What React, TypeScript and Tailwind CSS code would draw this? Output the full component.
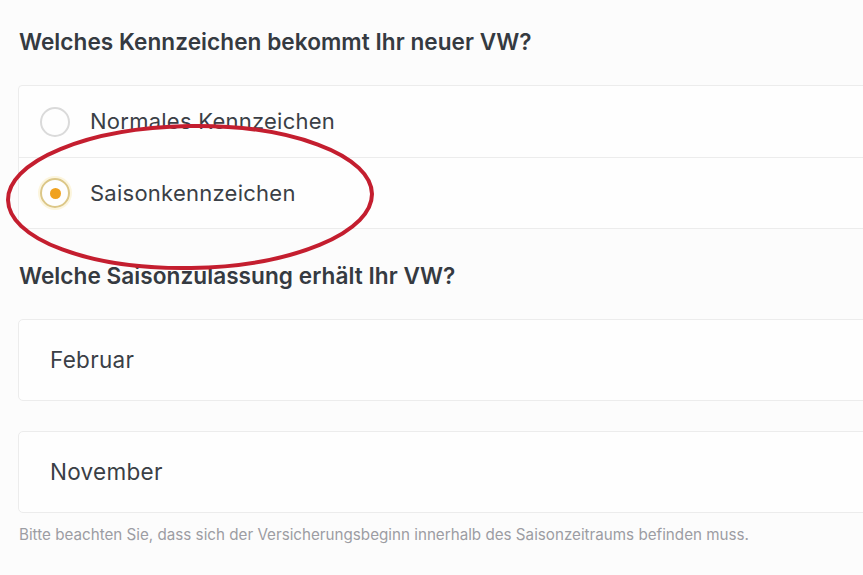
const options = [
  { label: "Normales Kennzeichen", checked: false },
  { label: "Saisonkennzeichen", checked: true },
];

function Radio({ checked }: { checked: boolean }) {
  if (checked) {
    return (
      <span className="flex h-[30px] w-[30px] items-center justify-center rounded-full border-2 border-[#dcc787] shadow-[0_0_0_2px_rgba(250,230,160,0.35)]">
        <span className="h-[11px] w-[11px] rounded-full bg-[#f0a21f]" />
      </span>
    );
  }
  return <span className="h-[30px] w-[30px] rounded-full border-2 border-[#dadada]" />;
}

export default function App() {
  return (
    <div className="relative min-h-screen overflow-hidden bg-[#fcfcfc] pl-[18px] pt-[29px] font-['Inter',sans-serif] text-[#353a41]">
      <h2 className="pl-px text-[22.6px] font-semibold leading-[26px] tracking-[0.05px]">
        Welches Kennzeichen bekommt Ihr neuer VW?
      </h2>

      <div className="mt-[30px] -mr-6 rounded-[4px] border border-[#ececec] bg-[#fefefe]">
        {options.map((o, i) => (
          <label
            key={o.label}
            className={`flex h-[71px] items-center gap-5 pl-[21px] ${i > 0 ? "border-t border-[#ececec]" : ""}`}
          >
            <Radio checked={o.checked} />
            <span className="text-[22px] tracking-[0.25px] text-[#3a3f46]">{o.label}</span>
          </label>
        ))}
      </div>

      <h2 className="mt-[34px] pl-px text-[22.6px] font-semibold leading-[26px] tracking-[0.05px]">
        Welche Saisonzulassung erhält Ihr VW?
      </h2>

      <div className="mt-[30px] -mr-6 flex flex-col gap-[30px]">
        {["Februar", "November"].map((m) => (
          <div
            key={m}
            className="flex h-[82px] items-center rounded-[5px] border border-[#ececec] bg-[#fefefe] pl-[31px] text-[22.5px] tracking-[0.3px] text-[#3a3f46]"
          >
            {m}
          </div>
        ))}
      </div>

      <p className="mt-[11px] pl-px text-[15.2px] text-[#9c9da3]">
        Bitte beachten Sie, dass sich der Versicherungsbeginn innerhalb des Saisonzeitraums befinden muss.
      </p>

      <svg
        className="pointer-events-none absolute left-0 top-0"
        width="400"
        height="290"
        viewBox="0 0 400 290"
      >
        <ellipse
          cx="190"
          cy="197"
          rx="182"
          ry="71"
          transform="rotate(-1 190 197)"
          fill="none"
          stroke="#c41e2f"
          strokeWidth="4"
        />
      </svg>
    </div>
  );
}
